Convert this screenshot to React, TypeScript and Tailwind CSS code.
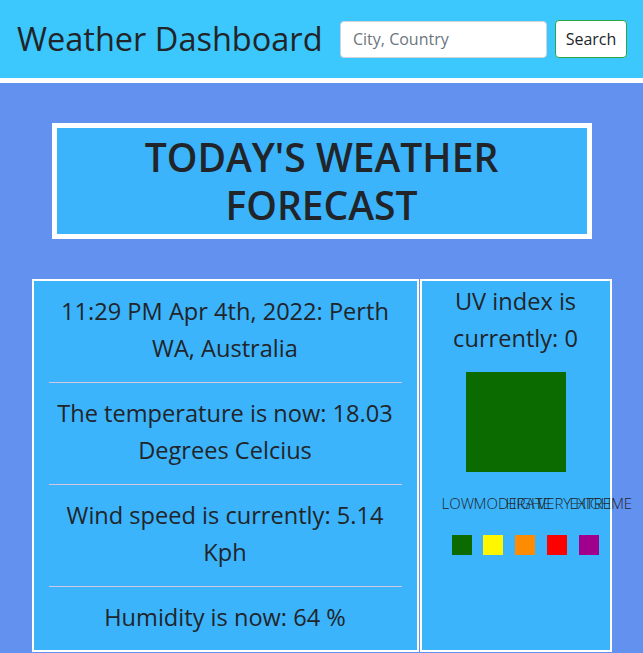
export default function App() {
  const sections = [
    ["11:29 PM Apr 4th, 2022: Perth", "WA, Australia"],
    ["The temperature is now: 18.03", "Degrees Celcius"],
    ["Wind speed is currently: 5.14", "Kph"],
    ["Humidity is now: 64 %"],
  ];
  const labels = ["LOW", "MODERATE", "HIGH", "VERY HIGH", "EXTREME"];
  const colors = ["bg-[#0b6b00]", "bg-[#fff700]", "bg-[#ff8c00]", "bg-[#ff0000]", "bg-[#a0008c]"];
  return (
    <div className="min-h-screen bg-[#6391f0] font-['Open_Sans',sans-serif] text-[#212529] overflow-hidden">
      <header className="h-[83px] bg-[#3cc8fc] border-b-[5px] border-white flex items-center pl-[17px]">
        <div className="w-[323px] shrink-0">
          <h1 className="text-[32.5px] leading-none whitespace-nowrap">Weather Dashboard</h1>
        </div>
        <input
          className="w-[207px] h-[37px] bg-white rounded-[4px] border border-[#ced4da] px-[12px] text-[16px] placeholder:text-[#6c757d] outline-none"
          placeholder="City, Country"
        />
        <button className="ml-[8px] w-[72px] h-[38px] bg-white rounded-[4px] border border-[#28a745] text-[16px] text-[#212529]">
          Search
        </button>
      </header>
      <main className="pt-[40px]">
        <div className="mx-auto w-[540px] border-[5px] border-white bg-[#3bb4fc] py-[5px] text-center text-[39px] leading-[48px] font-semibold">
          TODAY'S WEATHER
          <br />
          FORECAST
        </div>
        <div className="mx-auto mt-[40px] w-[580px] flex gap-[1px]">
          <div className="w-[387px] shrink-0 border-2 border-white bg-[#3bb4fc] pt-[11.5px] pb-[14.5px] px-[15px] text-center text-[23.6px] leading-[37px]">
            {sections.map((s, i) => (
              <div key={i}>
                {s.map((l, j) => (
                  <div key={j}>{l}</div>
                ))}
                {i < sections.length - 1 && (
                  <div className="mt-[15.5px] mb-[11.5px] h-px bg-[#d4c8e0]" />
                )}
              </div>
            ))}
          </div>
          <div className="w-[192px] shrink-0 border-2 border-white bg-[#3bb4fc] pt-[1.5px]">
            <div className="text-center text-[23.6px] leading-[37px]">
              <div>UV index is</div>
              <div>currently: 0</div>
            </div>
            <div className="mt-[15.5px] mx-auto w-[100px] h-[100px] bg-[#0b6b00]" />
            <div className="mt-[19px] pl-[20px] flex text-[15px] leading-[24px] font-light">
              {labels.map((l) => (
                <div key={l} className="w-[32px] shrink-0 whitespace-nowrap overflow-visible">
                  {l}
                </div>
              ))}
            </div>
            <div className="mt-[20px] pl-[30px] flex gap-[11.75px]">
              {colors.map((c) => (
                <div key={c} className={`w-[20px] h-[20px] ${c}`} />
              ))}
            </div>
          </div>
        </div>
      </main>
    </div>
  );
}
